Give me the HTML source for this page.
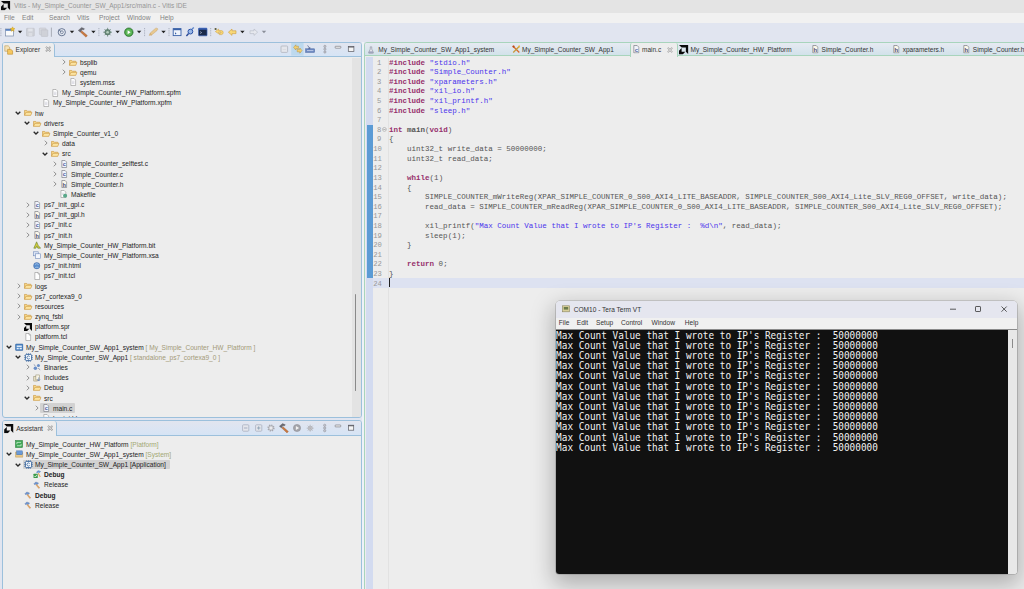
<!DOCTYPE html>
<html><head><meta charset="utf-8"><title>Vitis IDE</title>
<style>
*{margin:0;padding:0;box-sizing:border-box}
html,body{width:1024px;height:589px;overflow:hidden}
body{background:#e1e5f0;font-family:"Liberation Sans",sans-serif;font-size:6.6px;color:#232323;position:relative}
.abs{position:absolute}
.t{position:absolute;white-space:pre;line-height:10px;height:10px}
#title{left:0;top:0;width:1024px;height:12.5px;background:#e4e4e4}
#menu{left:0;top:12.5px;width:1024px;height:10.3px;background:#f1f1f1}
#tool{left:0;top:22.8px;width:1024px;height:18.2px;background:#e1e5f0}
.panel{position:absolute;background:#ededed;border:1px solid #9cc0dc;border-radius:3px;overflow:hidden}
.tabbar{position:absolute;left:0;top:0;right:0;background:linear-gradient(#e2e5ef,#d6e4f5);border-bottom:1px solid #9cc0dc}
.tab{position:absolute;left:0;top:0;background:#ededed;border-right:1px solid #9cc0dc;border-radius:0 3px 0 0}
.row{position:absolute;left:0;height:10px;line-height:10px;white-space:pre}
.ic{position:absolute;overflow:visible}
.sel{position:absolute;background:#d2d2d2;border-radius:1px}
.dim{color:#a39a78}
.mono{font-family:"Liberation Mono",monospace}
svg text{font-family:"Liberation Sans",sans-serif}
</style></head>
<body>

<svg width="0" height="0" style="position:absolute">
<defs>
<symbol id="i-folder" viewBox="0 0 10 8"><path d="M0.5 7.3V1.6h2.7l0.9 0.9h3.9v1.2" fill="#f7d98c" stroke="#c8923a" stroke-width=".7"/><path d="M0.6 7.4l1.6-3.6h7.3L7.9 7.4z" fill="#fbe3a0" stroke="#c8923a" stroke-width=".7" stroke-linejoin="round"/></symbol>
<symbol id="i-file" viewBox="0 0 8 10"><path d="M1 .6h4l2 2v6.8H1z" fill="#fff" stroke="#8a8a8a" stroke-width=".7"/><path d="M2.2 4h3.4M2.2 5.5h3.4M2.2 7h3.4" stroke="#b8b8c8" stroke-width=".6"/></symbol>
<symbol id="i-blank" viewBox="0 0 8 10"><path d="M1 .6h4l2 2v6.8H1z" fill="#fff" stroke="#8a8a8a" stroke-width=".7"/><path d="M5 .6v2h2" fill="none" stroke="#8a8a8a" stroke-width=".6"/></symbol>
<symbol id="i-c" viewBox="0 0 8 10"><path d="M1 .6h4l2 2v6.8H1z" fill="#f1f4fb" stroke="#74767e" stroke-width=".8"/><text x="2" y="8" font-size="7" font-weight="bold" fill="#4e5f9e">c</text></symbol>
<symbol id="i-h" viewBox="0 0 8 10"><path d="M1 .6h4l2 2v6.8H1z" fill="#fbf7ea" stroke="#74767e" stroke-width=".8"/><text x="1.8" y="8.2" font-size="7" font-weight="bold" fill="#46466a">h</text></symbol>
<symbol id="i-make" viewBox="0 0 9 10"><path d="M1 .6h4l2 2v6.8H1z" fill="#fff" stroke="#8a8a8a" stroke-width=".7"/><path d="M2.2 4h3.4M2.2 5.5h2" stroke="#b8b8c8" stroke-width=".6"/><circle cx="6.2" cy="7.2" r="2.6" fill="#5aa88a"/></symbol>
<symbol id="i-bit" viewBox="0 0 10 10"><path d="M1 9L4.5 1l2 4.5L9.5 9H6L4.8 6.5 3.5 9z" fill="#cfc93c" stroke="#5f7a2a" stroke-width=".7"/></symbol>
<symbol id="i-xsa" viewBox="0 0 10 10"><rect x=".5" y="1" width="6" height="5" fill="#dfe8f6" stroke="#6a86b8" stroke-width=".7"/><rect x="3" y="3.5" width="6.3" height="5.6" fill="#f4f7fc" stroke="#6a86b8" stroke-width=".7"/></symbol>
<symbol id="i-globe" viewBox="0 0 10 10"><circle cx="5" cy="5" r="4.2" fill="#5a8fcf" stroke="#3a5f9a" stroke-width=".6"/><path d="M2.5 3.2q2.5-1.8 5 0M3 7.5q2-1.2 4.4-.2" stroke="#cfe4f7" stroke-width=".8" fill="none"/></symbol>
<symbol id="i-amd" viewBox="0 0 10 10"><path d="M0 0L2.8 2.7H7.3V7.2L10 9.9V0z M2.8 3.3L0 6.1V10H3.9L6.7 7.2H2.8z" fill="#0a0a0a"/></symbol>
<symbol id="i-sys" viewBox="0 0 10 10"><rect x=".6" y="1.2" width="8.8" height="7.6" rx=".8" fill="#4e86c4" stroke="#2f5f9a" stroke-width=".6"/><rect x="2" y="3" width="6" height="1.6" fill="#eaf2fb"/><rect x="2" y="5.6" width="2.4" height="1.8" fill="#eaf2fb"/><rect x="5.4" y="5.6" width="2.6" height="1.8" fill="#eaf2fb"/></symbol>
<symbol id="i-app" viewBox="0 0 10 10"><rect x="1.6" y="1.6" width="6.8" height="6.8" rx="1" fill="#f2f6fb" stroke="#2f5f9a" stroke-width=".9"/><path d="M3 .3v1.3M5 .3v1.3M7 .3v1.3M3 8.4v1.3M5 8.4v1.3M7 8.4v1.3M.3 3h1.3M.3 5h1.3M.3 7h1.3M8.4 3h1.3M8.4 5h1.3M8.4 7h1.3" stroke="#2f5f9a" stroke-width=".8"/><path d="M6.3 3.9a1.7 1.7 0 1 0 0 2.2" fill="none" stroke="#2f5f9a" stroke-width=".9"/></symbol>
<symbol id="i-bin" viewBox="0 0 10 10"><circle cx="3" cy="6.5" r="2.2" fill="#6a8fc8"/><circle cx="6.8" cy="3.2" r="1.9" fill="#6a8fc8"/><path d="M1 2l2 1.5M6.5 6.5l2.5 2" stroke="#5a6a8a" stroke-width=".8"/></symbol>
<symbol id="i-inc" viewBox="0 0 10 10"><rect x="1" y="3" width="4.6" height="5.8" fill="#e9e2c8" stroke="#8a8262" stroke-width=".6"/><rect x="3.6" y="1.2" width="4.8" height="6.2" fill="#f6f3e6" stroke="#8a8262" stroke-width=".6"/><path d="M7.2 4.2v4.6M5.6 6.8l1.6 2 1.6-2" stroke="#5a7ab8" stroke-width=".8" fill="none"/></symbol>
<symbol id="i-ham" viewBox="0 0 10 10"><path d="M1 3.6L3.4 1.2 7 2.6 5.2 4.6 3.6 3.8 2.6 4.8z" fill="#6f95cf" stroke="#4a6a9f" stroke-width=".4"/><path d="M4.6 4.2l3.8 4.2-1.2 1L3.8 5z" fill="#e8a860" stroke="#b87a3a" stroke-width=".4"/></symbol>
<symbol id="i-hamg" viewBox="0 0 10 10"><path d="M3.6 2.6L6 .4l3.4 1.2L7.6 3.6 6 2.8 5 3.8z" fill="#6f95cf"/><path d="M6.6 3.2l2.6 4.6-1.2.8L5.6 4z" fill="#e8a860"/><rect x=".6" y="4.4" width="5" height="5" rx=".6" fill="#3a9a4a"/><path d="M1.6 7l1.2 1.2L4.6 5.6" stroke="#fff" stroke-width=".9" fill="none"/></symbol>
<symbol id="i-plat" viewBox="0 0 10 10"><rect x=".5" y=".5" width="9" height="9" fill="#3fa856" stroke="#2a7a3a" stroke-width=".6"/><path d="M2.4 3h5.2M2.4 3v2.2M7.6 5v2.2H2.4" stroke="#d8f2dc" stroke-width=".9" fill="none"/></symbol>
<symbol id="i-sysf" viewBox="0 0 10 10"><path d="M.6 8.4V2.4h2.6l.8.8h5.2v5.2z" fill="#e8c88a" stroke="#b8924a" stroke-width=".5"/><rect x="2" y="1" width="6.6" height="4.6" fill="#6a9ad8" stroke="#3a6aa8" stroke-width=".5"/></symbol>
<symbol id="i-flask" viewBox="0 0 8 10"><path d="M3 .8h2v3l2.2 4.6q.3 1-.8 1H1.6q-1.1 0-.8-1L3 3.8z" fill="#e4e6ee" stroke="#7a7e92" stroke-width=".7"/><path d="M1.7 7h4.6l.6 1.6H1.1z" fill="#8c90b0"/></symbol>
<symbol id="i-tools" viewBox="0 0 10 10"><path d="M1 1.2l7.6 7.6" stroke="#d8682a" stroke-width="1.5"/><path d="M9 1.2L1.4 8.8" stroke="#c89a3a" stroke-width="1.5"/><circle cx="1.8" cy="1.8" r="1.3" fill="#b84a1a"/><circle cx="8.4" cy="1.8" r="1.2" fill="#e8b84a"/></symbol>
<symbol id="a-r" viewBox="0 0 6 8"><path d="M1.8 1.7L4.1 4 1.8 6.3" fill="none" stroke="#8f8f8f" stroke-width="1"/></symbol>
<symbol id="a-d" viewBox="0 0 8 6"><path d="M1.7 1.7L4 4 6.3 1.7" fill="none" stroke="#2a2a2a" stroke-width="1.3"/></symbol>
</defs></svg>

<div id="title" class="abs"></div>
<svg class="ic" style="left:0.80px;top:1.30px" width="9.3" height="9.4" ><use href="#i-amd"/></svg>
<div class="t" style="left:14px;top:1px;color:#969696;font-size:6.55px">Vitis - My_Simple_Counter_SW_App1/src/main.c - Vitis IDE</div>
<div id="menu" class="abs"></div>
<div class="t" style="left:4px;top:13.4px;color:#828282">File</div>
<div class="t" style="left:22px;top:13.4px;color:#828282">Edit</div>
<div class="t" style="left:49px;top:13.4px;color:#828282">Search</div>
<div class="t" style="left:77px;top:13.4px;color:#828282">Vitis</div>
<div class="t" style="left:99px;top:13.4px;color:#828282">Project</div>
<div class="t" style="left:127px;top:13.4px;color:#828282">Window</div>
<div class="t" style="left:160px;top:13.4px;color:#828282">Help</div>
<div id="tool" class="abs"></div>
<svg class="ic" style="left:0;top:0" width="280" height="42" viewBox="0 0 280 42"><path d="M0.9 28v9" stroke="#9aa0b0" stroke-width=".9" stroke-dasharray=".9 .9"/><rect x="5.6" y="29" width="8" height="7" fill="#fbfbfb" stroke="#7a8aa8" stroke-width=".7"/><rect x="5.6" y="29" width="8" height="1.8" fill="#5a82c0"/><path d="M12.6 26.8l.8 1.5 1.6.3-1.2 1.1.3 1.7-1.5-.8-1.5.8.3-1.7-1.2-1.1 1.6-.3z" fill="#f0c030" stroke="#b88a18" stroke-width=".3"/><path d="M17.9 30.8h4.4l-2.2 2.5z" fill="#222"/><rect x="26.5" y="28.3" width="7.8" height="7.8" rx=".6" fill="#cfd1d8" stroke="#b8bac2" stroke-width=".5"/><rect x="28.2" y="28.6" width="4.4" height="2.8" fill="#e2e4ea"/><rect x="28.6" y="33" width="3.6" height="3" fill="#dcdee4"/><rect x="39.4" y="28" width="6.6" height="6.6" rx=".6" fill="#d6d8de" stroke="#bcbec6" stroke-width=".5"/><rect x="41.2" y="29.8" width="6.6" height="6.6" rx=".6" fill="#cfd1d8" stroke="#b8bac2" stroke-width=".5"/><path d="M51.4 27.6v9.2" stroke="#9a9ea8" stroke-width=".8"/><circle cx="61.8" cy="32.2" r="3.6" fill="#e8ecf4" stroke="#5a6a88" stroke-width=".9"/><circle cx="61.8" cy="32.2" r="1.5" fill="none" stroke="#5a6a88" stroke-width=".7"/><path d="M58.4 30l3 1.6" stroke="#5a6a88" stroke-width=".8"/><path d="M69.8 30.8h4.4l-2.2 2.5z" fill="#222"/><path d="M78.2 30.4l3.4-3 3 1.4-1.2 1.2-1.2-.4-1.8 2.6z" fill="#6a6a72" stroke="#4a4a52" stroke-width=".3"/><path d="M81.8 30.8l5.6 4.8-1.4 1.6-5.4-5z" fill="#c87840" stroke="#8a4a20" stroke-width=".3"/><path d="M91.2 30.8h4.4l-2.2 2.5z" fill="#222"/><path d="M98.9 28v9" stroke="#9aa0b0" stroke-width=".9" stroke-dasharray=".9 .9"/><circle cx="107.6" cy="32.2" r="2.7" fill="#7a9a8a" stroke="#4a6a5a" stroke-width=".7"/><path d="M107.6 27.8v8.8M103.2 32.2h8.8M104.5 29.1l6.2 6.2M110.7 29.1l-6.2 6.2" stroke="#5a7a6a" stroke-width=".7"/><circle cx="107.6" cy="32.2" r="1.3" fill="#b8d0c0"/><path d="M115.4 30.8h4.4l-2.2 2.5z" fill="#222"/><circle cx="128.8" cy="32.2" r="4.3" fill="#3f9a3f" stroke="#2a6a2a" stroke-width=".6"/><circle cx="128.8" cy="32.2" r="3.2" fill="#5fb85a"/><path d="M127.6 30.2l3 2-3 2z" fill="#fff"/><path d="M136.9 30.8h4.4l-2.2 2.5z" fill="#222"/><path d="M144.6 28v9" stroke="#9aa0b0" stroke-width=".9" stroke-dasharray=".9 .9"/><path d="M149.2 35.4l1-2.4 5.2-4.6q1.6-.6 2.2.2.4 1-.6 2l-5.4 4.4z" fill="#e8c890" stroke="#c09a58" stroke-width=".4"/><path d="M150 33.6l1.8 1.6" stroke="#b88a48" stroke-width=".5"/><path d="M161.3 30.8h4.4l-2.2 2.5z" fill="#222"/><path d="M169.0 28v9" stroke="#9aa0b0" stroke-width=".9" stroke-dasharray=".9 .9"/><rect x="173.2" y="28.6" width="7.8" height="7" fill="#eef3fb" stroke="#3a62a8" stroke-width=".9"/><rect x="173.2" y="28.6" width="7.8" height="1.6" fill="#3a62a8"/><path d="M175 32.2l1.6 1.2-1.6 1.2z" fill="#3a62a8"/><path d="M186.4 36l2.2-2.4" stroke="#2a4a98" stroke-width="1.5"/><circle cx="190.4" cy="31.6" r="2.4" fill="#9ab8e8" stroke="#2a52a8" stroke-width="1"/><path d="M191.6 29.6l2.2-2" stroke="#5a82c8" stroke-width="1.3"/><rect x="198.6" y="28.2" width="8.4" height="7.6" rx=".6" fill="#1a2a4a" stroke="#3a62b8" stroke-width=".7"/><rect x="198.6" y="28.2" width="8.4" height="1.5" fill="#3a62b8"/><path d="M200.2 31.6l1.4 1-1.4 1" stroke="#d8e4f8" stroke-width=".6" fill="none"/><path d="M210.7 28v9" stroke="#9aa0b0" stroke-width=".9" stroke-dasharray=".9 .9"/><path d="M215.4 31.6l3.2-2.6v1.6h3q1.8.2 1.6 2.2-.2 1.6-1.6 1.8h-2.2v-1.6h1.6v-.9h-2.4v1.6z" fill="#f8d878" stroke="#cc9a38" stroke-width=".5"/><circle cx="215.6" cy="29" r="1.1" fill="#5a5a3a"/><path d="M228.4 32.2l3.6-3.2v1.8h4v2.8h-4v1.8z" fill="#f8d878" stroke="#cc9a38" stroke-width=".6"/><path d="M240.2 30.8h4.4l-2.2 2.5z" fill="#222"/><path d="M257.6 32.2l-3.6-3.2v1.8h-4v2.8h4v1.8z" fill="#e6e8ee" stroke="#b4b8c2" stroke-width=".6"/><path d="M261.8 30.8h4.4l-2.2 2.5z" fill="#8a8e98"/></svg>
<div class="abs" style="left:362px;top:42px;width:2.4px;height:550px;background:#eef2f8"></div>
<div class="panel" style="left:2px;top:41.5px;width:360px;height:376.8px">
<div class="tabbar" style="height:14.5px"></div>
<div class="tab" style="width:51.5px;height:14.5px"></div>
<svg class="ic" style="left:1.2px;top:2px" width="10" height="10" viewBox="0 0 10 10"><path d="M.8.8h3.4l1.4 1.4v4H.8z" fill="#f4e2b8" stroke="#b89858" stroke-width=".6"/><path d="M3.6 4.4h3.2l1.8 1.4v3.4H3.6z" fill="#f6c860" stroke="#c08a28" stroke-width=".6"/></svg>
<div class="t" style="left:12.6px;top:2.1px;color:#333">Explorer</div>
<svg class="ic" style="left:41.6px;top:3.7px" width="6.4" height="6.4" viewBox="0 0 6 6"><path d="M.9.9l4.2 4.2M5.1.9L.9 5.1" stroke="#9a9a9a" stroke-width="1.7"/><path d="M.9.9l4.2 4.2M5.1.9L.9 5.1" stroke="#f0f0f0" stroke-width=".6"/></svg>
<svg class="ic" style="left:0;top:0" width="360" height="15" viewBox="3 43 360 15"><rect x="281" y="46" width="6.6" height="6.4" rx=".8" fill="#e4e6ec" stroke="#b0b4be" stroke-width=".8"/><path d="M282.6 49.2h3.4" stroke="#fff" stroke-width="1.3"/><path d="M282.6 49.2h3.4" stroke="#a0a4ae" stroke-width=".5"/><rect x="291.2" y="43" width="12.4" height="12.6" fill="#bdd9ee"/><path d="M293.6 47.4l2.2-2.6v1.4h2.6v2.4h-2.6v1.4z" fill="#f4d070" stroke="#b8903a" stroke-width=".5"/><path d="M302 50.6l-2.2 2.6v-1.4h-2.6v-2.4h2.6V48z" fill="#f4d070" stroke="#b8903a" stroke-width=".5"/><rect x="305.6" y="48.8" width="9" height="3.6" fill="#6a86c0" stroke="#4a66a0" stroke-width=".5"/><path d="M307.6 45.4l2.2 3.2M309.8 48.6v-1.6M309.8 48.6h-1.5" stroke="#4a5a8a" stroke-width=".7" fill="none"/><path d="M307 50.6h6.4" stroke="#dfe6f6" stroke-width=".7"/><circle cx="324.9" cy="46.4" r="1.15" fill="#c2c4cc" stroke="#8a8c96" stroke-width=".5"/><circle cx="324.9" cy="49.2" r="1.15" fill="#c2c4cc" stroke="#8a8c96" stroke-width=".5"/><circle cx="324.9" cy="52" r="1.15" fill="#c2c4cc" stroke="#8a8c96" stroke-width=".5"/><rect x="335.2" y="46.3" width="5.6" height="1.9" rx=".4" fill="#f4f4f4" stroke="#6a6a72" stroke-width=".6"/><rect x="348.3" y="46.5" width="5.6" height="5" fill="#f4f4f4" stroke="#5a5a62" stroke-width=".7"/><path d="M348.3 47h5.6" stroke="#5a5a62" stroke-width="1.1"/></svg>
<svg class="ic" style="left:57.60px;top:15.50px" width="6" height="8" ><use href="#a-r"/></svg><svg class="ic" style="left:65.95px;top:16.00px" width="8.5" height="7" ><use href="#i-folder"/></svg><div class="row" style="left:77.00px;top:15.10px;">bsplib</div>
<svg class="ic" style="left:57.60px;top:25.68px" width="6" height="8" ><use href="#a-r"/></svg><svg class="ic" style="left:65.95px;top:26.18px" width="8.5" height="7" ><use href="#i-folder"/></svg><div class="row" style="left:77.00px;top:25.28px;">qemu</div>
<svg class="ic" style="left:66.95px;top:35.86px" width="6.5" height="8" ><use href="#i-file"/></svg><div class="row" style="left:77.00px;top:35.46px;">system.mss</div>
<svg class="ic" style="left:48.95px;top:46.04px" width="6.5" height="8" ><use href="#i-file"/></svg><div class="row" style="left:59.00px;top:45.64px;">My_Simple_Counter_HW_Platform.spfm</div>
<svg class="ic" style="left:39.95px;top:56.22px" width="6.5" height="8" ><use href="#i-file"/></svg><div class="row" style="left:50.00px;top:55.82px;">My_Simple_Counter_HW_Platform.xpfm</div>
<svg class="ic" style="left:11.00px;top:67.40px" width="8" height="6" ><use href="#a-d"/></svg><svg class="ic" style="left:20.95px;top:66.90px" width="8.5" height="7" ><use href="#i-folder"/></svg><div class="row" style="left:32.00px;top:66.00px;">hw</div>
<svg class="ic" style="left:20.00px;top:77.58px" width="8" height="6" ><use href="#a-d"/></svg><svg class="ic" style="left:29.95px;top:77.08px" width="8.5" height="7" ><use href="#i-folder"/></svg><div class="row" style="left:41.00px;top:76.18px;">drivers</div>
<svg class="ic" style="left:29.00px;top:87.76px" width="8" height="6" ><use href="#a-d"/></svg><svg class="ic" style="left:38.95px;top:87.26px" width="8.5" height="7" ><use href="#i-folder"/></svg><div class="row" style="left:50.00px;top:86.36px;">Simple_Counter_v1_0</div>
<svg class="ic" style="left:39.60px;top:96.94px" width="6" height="8" ><use href="#a-r"/></svg><svg class="ic" style="left:47.95px;top:97.44px" width="8.5" height="7" ><use href="#i-folder"/></svg><div class="row" style="left:59.00px;top:96.54px;">data</div>
<svg class="ic" style="left:38.00px;top:108.12px" width="8" height="6" ><use href="#a-d"/></svg><svg class="ic" style="left:47.95px;top:107.62px" width="8.5" height="7" ><use href="#i-folder"/></svg><div class="row" style="left:59.00px;top:106.72px;">src</div>
<svg class="ic" style="left:48.60px;top:117.30px" width="6" height="8" ><use href="#a-r"/></svg><svg class="ic" style="left:57.95px;top:117.30px" width="6.5" height="8" ><use href="#i-c"/></svg><div class="row" style="left:68.00px;top:116.90px;">Simple_Counter_selftest.c</div>
<svg class="ic" style="left:48.60px;top:127.48px" width="6" height="8" ><use href="#a-r"/></svg><svg class="ic" style="left:57.95px;top:127.48px" width="6.5" height="8" ><use href="#i-c"/></svg><div class="row" style="left:68.00px;top:127.08px;">Simple_Counter.c</div>
<svg class="ic" style="left:48.60px;top:137.66px" width="6" height="8" ><use href="#a-r"/></svg><svg class="ic" style="left:57.95px;top:137.66px" width="6.5" height="8" ><use href="#i-h"/></svg><div class="row" style="left:68.00px;top:137.26px;">Simple_Counter.h</div>
<svg class="ic" style="left:57.45px;top:147.84px" width="7.5" height="8" ><use href="#i-make"/></svg><div class="row" style="left:68.00px;top:147.44px;">Makefile</div>
<svg class="ic" style="left:21.60px;top:158.02px" width="6" height="8" ><use href="#a-r"/></svg><svg class="ic" style="left:30.95px;top:158.02px" width="6.5" height="8" ><use href="#i-c"/></svg><div class="row" style="left:41.00px;top:157.62px;">ps7_init_gpl.c</div>
<svg class="ic" style="left:21.60px;top:168.20px" width="6" height="8" ><use href="#a-r"/></svg><svg class="ic" style="left:30.95px;top:168.20px" width="6.5" height="8" ><use href="#i-h"/></svg><div class="row" style="left:41.00px;top:167.80px;">ps7_init_gpl.h</div>
<svg class="ic" style="left:21.60px;top:178.38px" width="6" height="8" ><use href="#a-r"/></svg><svg class="ic" style="left:30.95px;top:178.38px" width="6.5" height="8" ><use href="#i-c"/></svg><div class="row" style="left:41.00px;top:177.98px;">ps7_init.c</div>
<svg class="ic" style="left:21.60px;top:188.56px" width="6" height="8" ><use href="#a-r"/></svg><svg class="ic" style="left:30.95px;top:188.56px" width="6.5" height="8" ><use href="#i-h"/></svg><div class="row" style="left:41.00px;top:188.16px;">ps7_init.h</div>
<svg class="ic" style="left:30.20px;top:198.74px" width="8" height="8" ><use href="#i-bit"/></svg><div class="row" style="left:41.00px;top:198.34px;">My_Simple_Counter_HW_Platform.bit</div>
<svg class="ic" style="left:30.20px;top:208.92px" width="8" height="8" ><use href="#i-xsa"/></svg><div class="row" style="left:41.00px;top:208.52px;">My_Simple_Counter_HW_Platform.xsa</div>
<svg class="ic" style="left:30.45px;top:219.35px" width="7.5" height="7.5" ><use href="#i-globe"/></svg><div class="row" style="left:41.00px;top:218.70px;">ps7_init.html</div>
<svg class="ic" style="left:30.95px;top:229.28px" width="6.5" height="8" ><use href="#i-blank"/></svg><div class="row" style="left:41.00px;top:228.88px;">ps7_init.tcl</div>
<svg class="ic" style="left:12.60px;top:239.46px" width="6" height="8" ><use href="#a-r"/></svg><svg class="ic" style="left:20.95px;top:239.96px" width="8.5" height="7" ><use href="#i-folder"/></svg><div class="row" style="left:32.00px;top:239.06px;">logs</div>
<svg class="ic" style="left:12.60px;top:249.64px" width="6" height="8" ><use href="#a-r"/></svg><svg class="ic" style="left:20.95px;top:250.14px" width="8.5" height="7" ><use href="#i-folder"/></svg><div class="row" style="left:32.00px;top:249.24px;">ps7_cortexa9_0</div>
<svg class="ic" style="left:12.60px;top:259.82px" width="6" height="8" ><use href="#a-r"/></svg><svg class="ic" style="left:20.95px;top:260.32px" width="8.5" height="7" ><use href="#i-folder"/></svg><div class="row" style="left:32.00px;top:259.42px;">resources</div>
<svg class="ic" style="left:12.60px;top:270.00px" width="6" height="8" ><use href="#a-r"/></svg><svg class="ic" style="left:20.95px;top:270.50px" width="8.5" height="7" ><use href="#i-folder"/></svg><div class="row" style="left:32.00px;top:269.60px;">zynq_fsbl</div>
<svg class="ic" style="left:21.20px;top:280.18px" width="8" height="8" ><use href="#i-amd"/></svg><div class="row" style="left:32.00px;top:279.78px;">platform.spr</div>
<svg class="ic" style="left:21.95px;top:290.36px" width="6.5" height="8" ><use href="#i-blank"/></svg><div class="row" style="left:32.00px;top:289.96px;">platform.tcl</div>
<svg class="ic" style="left:2.00px;top:301.54px" width="8" height="6" ><use href="#a-d"/></svg><svg class="ic" style="left:11.95px;top:300.29px" width="8.5" height="8.5" ><use href="#i-sys"/></svg><div class="row" style="left:23.00px;top:300.14px;">My_Simple_Counter_SW_App1_system<span class="dim"> [ My_Simple_Counter_HW_Platform ]</span></div>
<svg class="ic" style="left:11.00px;top:311.72px" width="8" height="6" ><use href="#a-d"/></svg><svg class="ic" style="left:20.70px;top:310.22px" width="9" height="9" ><use href="#i-app"/></svg><div class="row" style="left:32.00px;top:310.32px;">My_Simple_Counter_SW_App1<span class="dim"> [ standalone_ps7_cortexa9_0 ]</span></div>
<svg class="ic" style="left:21.60px;top:320.90px" width="6" height="8" ><use href="#a-r"/></svg><svg class="ic" style="left:30.20px;top:320.90px" width="8" height="8" ><use href="#i-bin"/></svg><div class="row" style="left:41.00px;top:320.50px;">Binaries</div>
<svg class="ic" style="left:21.60px;top:331.08px" width="6" height="8" ><use href="#a-r"/></svg><svg class="ic" style="left:30.20px;top:331.08px" width="8" height="8" ><use href="#i-inc"/></svg><div class="row" style="left:41.00px;top:330.68px;">Includes</div>
<svg class="ic" style="left:21.60px;top:341.26px" width="6" height="8" ><use href="#a-r"/></svg><svg class="ic" style="left:29.95px;top:341.76px" width="8.5" height="7" ><use href="#i-folder"/></svg><div class="row" style="left:41.00px;top:340.86px;">Debug</div>
<svg class="ic" style="left:20.00px;top:352.44px" width="8" height="6" ><use href="#a-d"/></svg><svg class="ic" style="left:29.95px;top:351.94px" width="8.5" height="7" ><use href="#i-folder"/></svg><div class="row" style="left:41.00px;top:351.04px;">src</div>
<div class="sel" style="left:37.30px;top:360.72px;width:34.30px;height:9.7px"></div><svg class="ic" style="left:30.60px;top:361.62px" width="6" height="8" ><use href="#a-r"/></svg><svg class="ic" style="left:39.95px;top:361.62px" width="6.5" height="8" ><use href="#i-c"/></svg><div class="row" style="left:50.00px;top:361.22px;">main.c</div>
<svg class="ic" style="left:39.95px;top:371.80px" width="6.5" height="8" ><use href="#i-file"/></svg><div class="row" style="left:50.00px;top:371.40px;">lscript.ld</div>
<div class="abs" style="left:349px;top:15.5px;width:9px;height:376.8px;background:#e3e3e3"></div>
<div class="abs" style="left:352.2px;top:251.5px;width:1.3px;height:97px;background:#8a8a8a;border-radius:1px"></div>
</div>
<div class="panel" style="left:2px;top:420px;width:360px;height:180px">
<div class="tabbar" style="height:15.2px"></div>
<div class="tab" style="width:53.5px;height:15.2px"></div>
<svg class="ic" style="left:1.00px;top:3.00px" width="9.6" height="9.2" ><use href="#i-amd"/></svg>
<div class="t" style="left:13.2px;top:2.9px;color:#333">Assistant</div>
<svg class="ic" style="left:43.8px;top:4.3px" width="6.4" height="6.4" viewBox="0 0 6 6"><path d="M.9.9l4.2 4.2M5.1.9L.9 5.1" stroke="#9a9a9a" stroke-width="1.7"/><path d="M.9.9l4.2 4.2M5.1.9L.9 5.1" stroke="#f0f0f0" stroke-width=".6"/></svg>
<svg class="ic" style="left:0;top:0" width="360" height="16" viewBox="3 421 360 16"><rect x="242.6" y="424.8" width="6.2" height="6.4" rx=".8" fill="#e4e6ec" stroke="#aab0c0" stroke-width=".8"/><path d="M244 428h3.4" stroke="#8a94b0" stroke-width=".7"/><rect x="255.6" y="424.8" width="6.2" height="6.4" rx=".8" fill="#e4e6ec" stroke="#aab0c0" stroke-width=".8"/><path d="M257 428h3.4M258.7 426.3v3.4" stroke="#7a90a8" stroke-width=".7"/><circle cx="271" cy="428" r="2.7" fill="none" stroke="#a8a8ae" stroke-width="1.8" stroke-dasharray="1.2 .9"/><circle cx="271" cy="428" r="2.3" fill="#dcdce0" stroke="#a0a0a6" stroke-width=".6"/><circle cx="271" cy="428" r=".9" fill="#f0f0f2"/><path d="M279.4 426.2l3.2-2.6 2.8 1.2-1.2 1.2-1.2-.4-1.6 2.4z" fill="#6a6a72" stroke="#4a4a52" stroke-width=".3"/><path d="M283 426.8l5.4 4.6-1.4 1.5-5.2-4.8z" fill="#c87840" stroke="#8a4a20" stroke-width=".3"/><circle cx="297" cy="428" r="3.6" fill="#a4a4aa" stroke="#8a8a90" stroke-width=".5"/><path d="M295.9 425.9l3.2 2.1-3.2 2.1z" fill="#f2f2f2"/><circle cx="310.2" cy="428.2" r="2.1" fill="#d8d8dc" stroke="#a8a8ae" stroke-width=".7"/><path d="M310.2 424.6v7.2M306.6 428.2h7.2M307.6 425.6l5.2 5.2M312.8 425.6l-5.2 5.2" stroke="#b0b0b6" stroke-width=".6"/><circle cx="324.7" cy="425.3" r="1.15" fill="#c2c4cc" stroke="#8a8c96" stroke-width=".5"/><circle cx="324.7" cy="428" r="1.15" fill="#c2c4cc" stroke="#8a8c96" stroke-width=".5"/><circle cx="324.7" cy="430.7" r="1.15" fill="#c2c4cc" stroke="#8a8c96" stroke-width=".5"/><rect x="335.2" y="425" width="5.5" height="1.9" rx=".4" fill="#f4f4f4" stroke="#6a6a72" stroke-width=".6"/><rect x="348.4" y="425.2" width="5.3" height="5" fill="#f4f4f4" stroke="#5a5a62" stroke-width=".7"/><path d="M348.4 425.7h5.3" stroke="#5a5a62" stroke-width="1.1"/></svg>
<svg class="ic" style="left:12.20px;top:19.30px" width="8" height="8" ><use href="#i-plat"/></svg><div class="row" style="left:23.00px;top:18.90px;">My_Simple_Counter_HW_Platform<span class="dim" style="color:#a3a874"> [Platform]</span></div>
<svg class="ic" style="left:2.00px;top:30.40px" width="8" height="6" ><use href="#a-d"/></svg><svg class="ic" style="left:11.95px;top:29.15px" width="8.5" height="8.5" ><use href="#i-sysf"/></svg><div class="row" style="left:23.00px;top:29.00px;">My_Simple_Counter_SW_App1_system<span class="dim" style="color:#a3a874"> [System]</span></div>
<div class="sel" style="left:19.50px;top:38.60px;width:147.30px;height:9.7px"></div><svg class="ic" style="left:11.00px;top:40.50px" width="8" height="6" ><use href="#a-d"/></svg><svg class="ic" style="left:20.70px;top:39.00px" width="9" height="9" ><use href="#i-app"/></svg><div class="row" style="left:32.00px;top:39.10px;">My_Simple_Counter_SW_App1 [Application]</div>
<svg class="ic" style="left:29.95px;top:49.45px" width="8.5" height="8.5" ><use href="#i-hamg"/></svg><div class="row" style="left:41.00px;top:49.30px;font-weight:bold;">Debug</div>
<svg class="ic" style="left:30.20px;top:59.80px" width="8" height="8" ><use href="#i-ham"/></svg><div class="row" style="left:41.00px;top:59.40px;">Release</div>
<svg class="ic" style="left:21.20px;top:70.00px" width="8" height="8" ><use href="#i-ham"/></svg><div class="row" style="left:32.00px;top:69.60px;font-weight:bold;">Debug</div>
<svg class="ic" style="left:21.20px;top:80.20px" width="8" height="8" ><use href="#i-ham"/></svg><div class="row" style="left:32.00px;top:79.80px;">Release</div>
</div>
<div class="abs" id="editor" style="left:364px;top:41.5px;width:670px;height:560px;background:#ededed;border:1px solid #a8d4bc;border-radius:3px 0 0 0;overflow:hidden">
<div class="abs" style="left:0;top:0;width:670px;height:13.6px;background:linear-gradient(#e6eaf2,#d2e2ea);border-bottom:1px solid #a8d4bc"></div>
<div class="abs" style="left:264.5px;top:0;width:48px;height:14.6px;background:#ededed;border-left:1px solid #a8d4bc;border-right:1px solid #a8d4bc;border-radius:2px 2px 0 0"></div>
<svg class="ic" style="left:3.00px;top:3.00px" width="6" height="8" ><use href="#i-flask"/></svg>
<div class="t" style="left:13.300000000000011px;top:2.40px;color:#333;font-size:6.5px">My_Simple_Counter_SW_App1_system</div>
<svg class="ic" style="left:146.50px;top:2.75px" width="8.5" height="8.5" ><use href="#i-tools"/></svg>
<div class="t" style="left:157px;top:2.40px;color:#333;font-size:6.5px">My_Simple_Counter_SW_App1</div>
<svg class="ic" style="left:267.50px;top:2.80px" width="6.7" height="8.4" ><use href="#i-c"/></svg>
<div class="t" style="left:277px;top:2.40px;color:#333;font-size:6.5px">main.c</div>
<svg class="ic" style="left:314.00px;top:2.30px" width="9.4" height="9.4" ><use href="#i-amd"/></svg>
<div class="t" style="left:325.5px;top:2.40px;color:#333;font-size:6.5px">My_Simple_Counter_HW_Platform</div>
<svg class="ic" style="left:447.00px;top:2.80px" width="6.7" height="8.4" ><use href="#i-h"/></svg>
<div class="t" style="left:456.6px;top:2.40px;color:#333;font-size:6.5px">Simple_Counter.h</div>
<svg class="ic" style="left:528.20px;top:2.80px" width="6.7" height="8.4" ><use href="#i-h"/></svg>
<div class="t" style="left:537.7px;top:2.40px;color:#333;font-size:6.5px">xparameters.h</div>
<svg class="ic" style="left:598.30px;top:2.80px" width="6.7" height="8.4" ><use href="#i-h"/></svg>
<div class="t" style="left:607.8px;top:2.40px;color:#333;font-size:6.5px">Simple_Counter.h</div>
<svg class="ic" style="left:302px;top:4.200000000000003px" width="6" height="6" viewBox="0 0 6 6"><path d="M.8.8l4.4 4.4M5.2.8L.8 5.2" stroke="#999" stroke-width="1.6"/><path d="M.8.8l4.4 4.4M5.2.8L.8 5.2" stroke="#f4f4f4" stroke-width=".6"/></svg>
<div class="abs" style="left:1.2px;top:14.6px;width:6.7px;height:560px;background:#d3dbf0"></div>
<div class="abs" style="left:1.5px;top:82.5px;width:6.1px;height:153.3px;background:#5b9bd5"></div>
<div class="abs" style="left:22.5px;top:15px;width:.6px;height:560px;background:#e2e2e2"></div>
<svg class="ic" style="left:17.19999999999999px;top:84.7px" width="4.8" height="4.8" viewBox="0 0 5 5"><circle cx="2.5" cy="2.5" r="2" fill="#f4f4f4" stroke="#9a9a9a" stroke-width=".6"/><path d="M1.3 2.5h2.4" stroke="#777" stroke-width=".6"/></svg>
<div class="abs" style="left:8px;top:235.8px;width:660px;height:9.7px;background:#dde2f1"></div>
<div class="abs" style="left:24px;top:235.8px;width:.9px;height:9px;background:#222"></div>
<div class="t mono" style="left:12.00px;top:15.00px;color:#989898;font-size:7.2px">1</div>
<div class="t mono" style="left:24px;top:15.00px;color:#555;font-size:7.52px"><b style="color:#96306c">#include</b> <span style="color:#4c34ec">&quot;stdio.h&quot;</span></div>
<div class="t mono" style="left:12.00px;top:24.61px;color:#989898;font-size:7.2px">2</div>
<div class="t mono" style="left:24px;top:24.61px;color:#555;font-size:7.52px"><b style="color:#96306c">#include</b> <span style="color:#4c34ec">&quot;Simple_Counter.h&quot;</span></div>
<div class="t mono" style="left:12.00px;top:34.23px;color:#989898;font-size:7.2px">3</div>
<div class="t mono" style="left:24px;top:34.23px;color:#555;font-size:7.52px"><b style="color:#96306c">#include</b> <span style="color:#4c34ec">&quot;xparameters.h&quot;</span></div>
<div class="t mono" style="left:12.00px;top:43.84px;color:#989898;font-size:7.2px">4</div>
<div class="t mono" style="left:24px;top:43.84px;color:#555;font-size:7.52px"><b style="color:#96306c">#include</b> <span style="color:#4c34ec">&quot;xil_io.h&quot;</span></div>
<div class="t mono" style="left:12.00px;top:53.46px;color:#989898;font-size:7.2px">5</div>
<div class="t mono" style="left:24px;top:53.46px;color:#555;font-size:7.52px"><b style="color:#96306c">#include</b> <span style="color:#4c34ec">&quot;xil_printf.h&quot;</span></div>
<div class="t mono" style="left:12.00px;top:63.08px;color:#989898;font-size:7.2px">6</div>
<div class="t mono" style="left:24px;top:63.08px;color:#555;font-size:7.52px"><b style="color:#96306c">#include</b> <span style="color:#4c34ec">&quot;sleep.h&quot;</span></div>
<div class="t mono" style="left:12.00px;top:72.69px;color:#989898;font-size:7.2px">7</div>
<div class="t mono" style="left:12.00px;top:82.31px;color:#989898;font-size:7.2px">8</div>
<div class="t mono" style="left:24px;top:82.31px;color:#555;font-size:7.52px"><b style="color:#96306c">int</b> <b>main</b>(<b style="color:#96306c">void</b>)</div>
<div class="t mono" style="left:12.00px;top:91.92px;color:#989898;font-size:7.2px">9</div>
<div class="t mono" style="left:24px;top:91.92px;color:#555;font-size:7.52px">{</div>
<div class="t mono" style="left:8.30px;top:101.53px;color:#989898;font-size:7.2px">10</div>
<div class="t mono" style="left:24px;top:101.53px;color:#555;font-size:7.52px">    uint32_t write_data = 50000000;</div>
<div class="t mono" style="left:8.30px;top:111.15px;color:#989898;font-size:7.2px">11</div>
<div class="t mono" style="left:24px;top:111.15px;color:#555;font-size:7.52px">    uint32_t read_data;</div>
<div class="t mono" style="left:8.30px;top:120.76px;color:#989898;font-size:7.2px">12</div>
<div class="t mono" style="left:8.30px;top:130.38px;color:#989898;font-size:7.2px">13</div>
<div class="t mono" style="left:24px;top:130.38px;color:#555;font-size:7.52px">    <b style="color:#96306c">while</b>(1)</div>
<div class="t mono" style="left:8.30px;top:140.00px;color:#989898;font-size:7.2px">14</div>
<div class="t mono" style="left:24px;top:140.00px;color:#555;font-size:7.52px">    {</div>
<div class="t mono" style="left:8.30px;top:149.61px;color:#989898;font-size:7.2px">15</div>
<div class="t mono" style="left:24px;top:149.61px;color:#555;font-size:7.52px">        SIMPLE_COUNTER_mWriteReg(XPAR_SIMPLE_COUNTER_0_S00_AXI4_LITE_BASEADDR, SIMPLE_COUNTER_S00_AXI4_Lite_SLV_REG0_OFFSET, write_data);</div>
<div class="t mono" style="left:8.30px;top:159.22px;color:#989898;font-size:7.2px">16</div>
<div class="t mono" style="left:24px;top:159.22px;color:#555;font-size:7.52px">        read_data = SIMPLE_COUNTER_mReadReg(XPAR_SIMPLE_COUNTER_0_S00_AXI4_LITE_BASEADDR, SIMPLE_COUNTER_S00_AXI4_Lite_SLV_REG0_OFFSET);</div>
<div class="t mono" style="left:8.30px;top:168.84px;color:#989898;font-size:7.2px">17</div>
<div class="t mono" style="left:8.30px;top:178.46px;color:#989898;font-size:7.2px">18</div>
<div class="t mono" style="left:24px;top:178.46px;color:#555;font-size:7.52px">        xil_printf(<span style="color:#4c34ec">&quot;Max Count Value that I wrote to IP&#x27;s Register :  %d\n&quot;</span>, read_data);</div>
<div class="t mono" style="left:8.30px;top:188.07px;color:#989898;font-size:7.2px">19</div>
<div class="t mono" style="left:24px;top:188.07px;color:#555;font-size:7.52px">        sleep(1);</div>
<div class="t mono" style="left:8.30px;top:197.69px;color:#989898;font-size:7.2px">20</div>
<div class="t mono" style="left:24px;top:197.69px;color:#555;font-size:7.52px">    }</div>
<div class="t mono" style="left:8.30px;top:207.30px;color:#989898;font-size:7.2px">21</div>
<div class="t mono" style="left:8.30px;top:216.91px;color:#989898;font-size:7.2px">22</div>
<div class="t mono" style="left:24px;top:216.91px;color:#555;font-size:7.52px">    <b style="color:#96306c">return</b> 0;</div>
<div class="t mono" style="left:8.30px;top:226.53px;color:#989898;font-size:7.2px">23</div>
<div class="t mono" style="left:24px;top:226.53px;color:#555;font-size:7.52px">}</div>
<div class="t mono" style="left:8.30px;top:236.14px;color:#989898;font-size:7.2px">24</div>
</div>
<div class="abs" style="left:555.5px;top:301px;width:461.5px;height:272.5px;background:#f3f3f3;border-radius:4px 4px 3px 3px;box-shadow:0 8px 22px 3px rgba(0,0,0,.26),0 0 0 .6px rgba(110,110,110,.45);overflow:hidden">
<div class="abs" style="left:0;top:0;width:461.5px;height:17px;background:#e5e6ef"></div>
<div class="abs" style="left:0;top:17px;width:461.5px;height:12px;background:#f0f0f0"></div>
<svg class="ic" style="left:6.5px;top:4px" width="8" height="8" viewBox="0 0 8 8"><rect x=".5" y=".8" width="7" height="6" fill="#d8cf9a" stroke="#8a8460" stroke-width=".6"/><rect x="1.8" y="2" width="4.4" height="2.6" fill="#6a7a4a"/></svg>
<div class="t" style="left:18.299999999999955px;top:3.5999999999999996px;color:#333;font-size:6.55px">COM10 - Tera Term VT</div>
<div class="t" style="left:3.2999999999999545px;top:17.2px;color:#333">File</div>
<div class="t" style="left:21.299999999999955px;top:17.2px;color:#333">Edit</div>
<div class="t" style="left:40.5px;top:17.2px;color:#333">Setup</div>
<div class="t" style="left:65.5px;top:17.2px;color:#333">Control</div>
<div class="t" style="left:96.0px;top:17.2px;color:#333">Window</div>
<div class="t" style="left:129.29999999999995px;top:17.2px;color:#333">Help</div>
<svg class="ic" style="left:389.5px;top:2px" width="68" height="12" viewBox="0 0 68 12"><path d="M5 6.2h6" stroke="#333" stroke-width=".8"/><rect x="30.5" y="3.5" width="5" height="5" rx=".6" fill="none" stroke="#333" stroke-width=".8"/><path d="M56.5 3.5l5.2 5.2M61.7 3.5l-5.2 5.2" stroke="#333" stroke-width=".8"/></svg>
<div class="abs" style="left:0;top:28.3px;width:461.5px;height:1px;background:#8a8a8a"></div>
<div class="abs" style="left:.5px;top:29px;width:452px;height:243.5px;background:#111"></div>
<div class="abs" style="left:452.5px;top:29px;width:9px;height:243.5px;background:#e8e8e8"></div>
<div class="abs" style="left:456.3px;top:38px;width:1px;height:9px;background:#8a8a8a"></div>
<div class="t" style="left:.6px;top:29.80px;color:#f2f2f2;font-family:'DejaVu Sans Mono','Liberation Mono',monospace;font-size:9.38px;transform:scaleY(1.07);transform-origin:50% 55%">Max Count Value that I wrote to IP's Register :  50000000</div>
<div class="t" style="left:.6px;top:39.97px;color:#f2f2f2;font-family:'DejaVu Sans Mono','Liberation Mono',monospace;font-size:9.38px;transform:scaleY(1.07);transform-origin:50% 55%">Max Count Value that I wrote to IP's Register :  50000000</div>
<div class="t" style="left:.6px;top:50.14px;color:#f2f2f2;font-family:'DejaVu Sans Mono','Liberation Mono',monospace;font-size:9.38px;transform:scaleY(1.07);transform-origin:50% 55%">Max Count Value that I wrote to IP's Register :  50000000</div>
<div class="t" style="left:.6px;top:60.31px;color:#f2f2f2;font-family:'DejaVu Sans Mono','Liberation Mono',monospace;font-size:9.38px;transform:scaleY(1.07);transform-origin:50% 55%">Max Count Value that I wrote to IP's Register :  50000000</div>
<div class="t" style="left:.6px;top:70.48px;color:#f2f2f2;font-family:'DejaVu Sans Mono','Liberation Mono',monospace;font-size:9.38px;transform:scaleY(1.07);transform-origin:50% 55%">Max Count Value that I wrote to IP's Register :  50000000</div>
<div class="t" style="left:.6px;top:80.65px;color:#f2f2f2;font-family:'DejaVu Sans Mono','Liberation Mono',monospace;font-size:9.38px;transform:scaleY(1.07);transform-origin:50% 55%">Max Count Value that I wrote to IP's Register :  50000000</div>
<div class="t" style="left:.6px;top:90.82px;color:#f2f2f2;font-family:'DejaVu Sans Mono','Liberation Mono',monospace;font-size:9.38px;transform:scaleY(1.07);transform-origin:50% 55%">Max Count Value that I wrote to IP's Register :  50000000</div>
<div class="t" style="left:.6px;top:100.99px;color:#f2f2f2;font-family:'DejaVu Sans Mono','Liberation Mono',monospace;font-size:9.38px;transform:scaleY(1.07);transform-origin:50% 55%">Max Count Value that I wrote to IP's Register :  50000000</div>
<div class="t" style="left:.6px;top:111.16px;color:#f2f2f2;font-family:'DejaVu Sans Mono','Liberation Mono',monospace;font-size:9.38px;transform:scaleY(1.07);transform-origin:50% 55%">Max Count Value that I wrote to IP's Register :  50000000</div>
<div class="t" style="left:.6px;top:121.33px;color:#f2f2f2;font-family:'DejaVu Sans Mono','Liberation Mono',monospace;font-size:9.38px;transform:scaleY(1.07);transform-origin:50% 55%">Max Count Value that I wrote to IP's Register :  50000000</div>
<div class="t" style="left:.6px;top:131.50px;color:#f2f2f2;font-family:'DejaVu Sans Mono','Liberation Mono',monospace;font-size:9.38px;transform:scaleY(1.07);transform-origin:50% 55%">Max Count Value that I wrote to IP's Register :  50000000</div>
<div class="t" style="left:.6px;top:141.67px;color:#f2f2f2;font-family:'DejaVu Sans Mono','Liberation Mono',monospace;font-size:9.38px;transform:scaleY(1.07);transform-origin:50% 55%">Max Count Value that I wrote to IP's Register :  50000000</div>
</div>
</body></html>
